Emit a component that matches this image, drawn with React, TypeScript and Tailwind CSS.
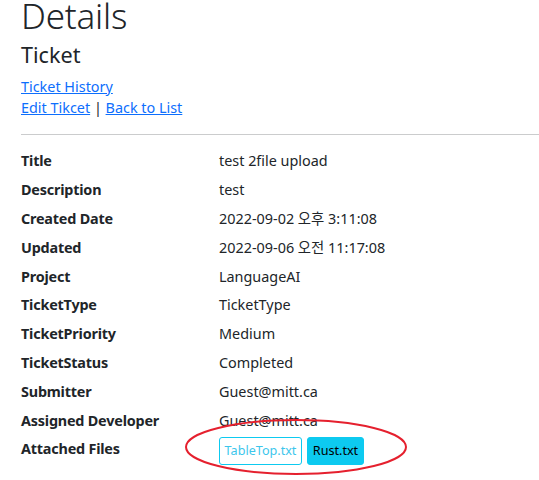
import React from "react";

const rows: { label: string; value: string }[] = [
  { label: "Title", value: "test 2file upload" },
  { label: "Description", value: "test" },
  { label: "Created Date", value: "2022-09-02 오후 3:11:08" },
  { label: "Updated", value: "2022-09-06 오전 11:17:08" },
  { label: "Project", value: "LanguageAI" },
  { label: "TicketType", value: "TicketType" },
  { label: "TicketPriority", value: "Medium" },
  { label: "TicketStatus", value: "Completed" },
  { label: "Submitter", value: "Guest@mitt.ca" },
  { label: "Assigned Developer", value: "Guest@mitt.ca" },
];

export default function App() {
  return (
    <div
      className="relative w-[539px] h-[480px] overflow-hidden bg-white text-[#212529] text-[14.4px] leading-[21.6px]"
      style={{ fontFamily: '"Noto Sans", "Noto Sans CJK KR", sans-serif' }}
    >
      <div className="pl-[21px]">
        <h1 className="text-[35px] leading-[32px] h-[30px] font-light tracking-[-0.2px]">Details</h1>
        <h4 className="mt-[11.6px] text-[21.6px] leading-[26px] h-[26px] font-normal">Ticket</h4>
        <div className="mt-[8px]">
          <a href="#" className="text-[#0d6efd] underline">
            Ticket History
          </a>
        </div>
        <div>
          <a href="#" className="text-[#0d6efd] underline">
            Edit Tikcet
          </a>{" "}
          |{" "}
          <a href="#" className="text-[#0d6efd] underline">
            Back to List
          </a>
        </div>
        <hr className="mt-[15px] border-0 border-t border-[#cbcccd]" />
        <dl className="mt-[15.6px] grid grid-cols-[198px_1fr]">
          {rows.map((r) => (
            <React.Fragment key={r.label}>
              <dt className="font-bold h-[28.8px] tracking-[-0.2px]">{r.label}</dt>
              <dd className="h-[28.8px]">{r.value}</dd>
            </React.Fragment>
          ))}
          <dt className="font-bold tracking-[-0.2px]">Attached Files</dt>
          <dd className="flex gap-[5px] -mt-[1px]">
            <button className="h-[28px] w-[83px] rounded-[3px] border border-[#0dcaf0] text-[#3cc6ec] text-[12.6px] leading-[18px]">
              TableTop.txt
            </button>
            <button className="h-[28px] w-[57px] rounded-[3px] border border-[#0dcaf0] bg-[#0dcaf0] text-black text-[12.6px] leading-[18px]">
              Rust.txt
            </button>
          </dd>
        </dl>
      </div>
      <svg className="absolute left-0 top-0 pointer-events-none" width="539" height="480">
        <ellipse cx="296" cy="447" rx="110" ry="27" fill="none" stroke="#e5202e" strokeWidth="2" />
      </svg>
    </div>
  );
}
